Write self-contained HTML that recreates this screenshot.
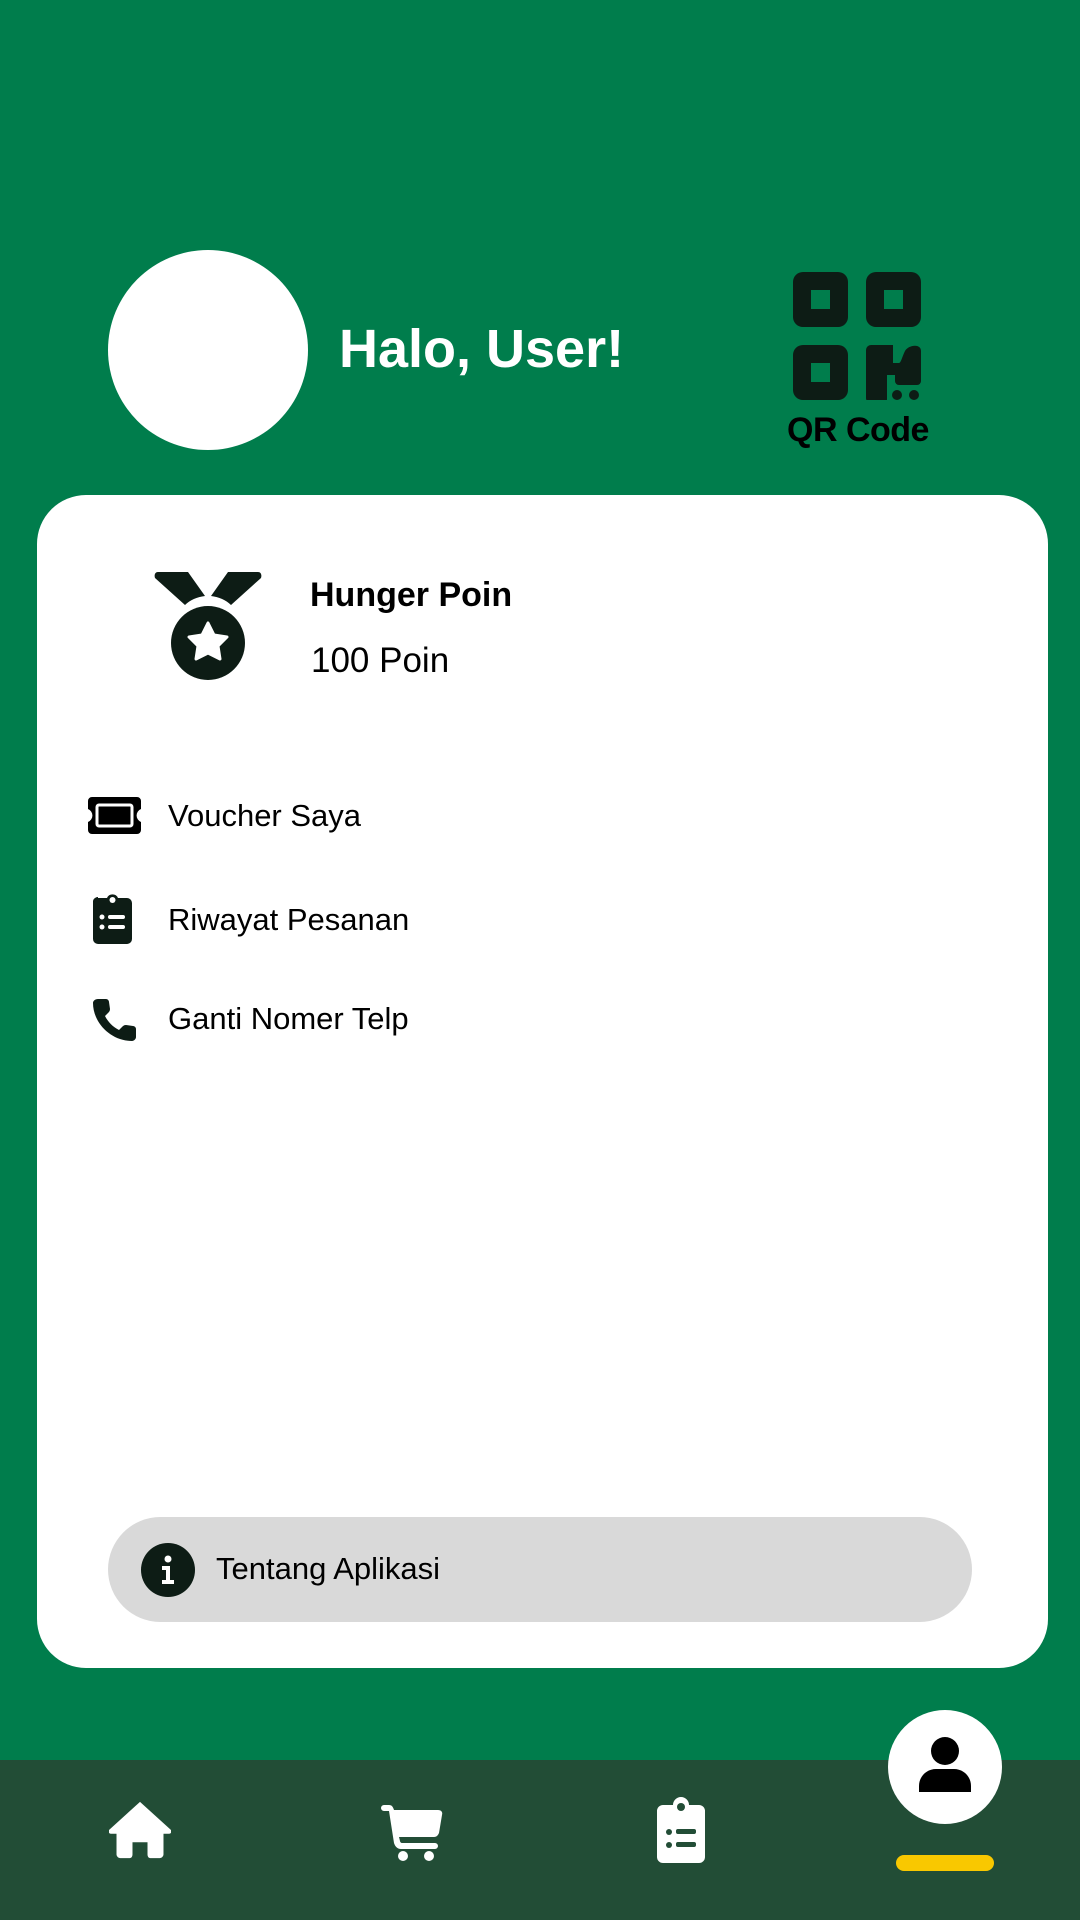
<!DOCTYPE html>
<html><head><meta charset="utf-8"><style>
*{margin:0;padding:0;box-sizing:border-box}
body{width:1080px;height:1920px;background:#007d4c;position:relative;overflow:hidden;font-family:"Liberation Sans",sans-serif}
.a{position:absolute}
.t{position:absolute;white-space:nowrap;color:#000;line-height:1}
</style></head><body>
<div class="a" style="left:108px;top:250px;width:200px;height:200px;border-radius:50%;background:#fff"></div>
<div class="t" style="left:339px;top:322px;font-size:54px;font-weight:bold;color:#fff">Halo, User!</div>
<svg class="a" style="left:793px;top:272px" width="128" height="128" viewBox="0 0 128 128" fill="#0d1c15">
<path fill-rule="evenodd" d="M10 0h35a10 10 0 0 1 10 10v35a10 10 0 0 1-10 10H10A10 10 0 0 1 0 45V10A10 10 0 0 1 10 0zM18 18v19h19V18z"/>
<path fill-rule="evenodd" d="M83 0h35a10 10 0 0 1 10 10v35a10 10 0 0 1-10 10H83a10 10 0 0 1-10-10V10A10 10 0 0 1 83 0zM91 18v19h19V18z"/>
<path fill-rule="evenodd" d="M10 73h35a10 10 0 0 1 10 10v35a10 10 0 0 1-10 10H10a10 10 0 0 1-10-10V83a10 10 0 0 1 10-10zM18 91v19h19V91z"/>
<path d="M78 73h22v18h6c2 0 3-6 6-12 3-6 16-8 16 0v30a4 4 0 0 1-4 4h-18a4 4 0 0 1-4-4v-6h-8v24a4 4 0 0 1-4 4H78a5 5 0 0 1-5-5V78a5 5 0 0 1 5-5z"/>
<circle cx="104" cy="123" r="5"/><circle cx="121" cy="123" r="5"/>
</svg>
<div class="t" style="left:787px;top:413px;font-size:34px;font-weight:bold;letter-spacing:-0.5px">QR Code</div>

<div class="a" style="left:37px;top:495px;width:1011px;height:1173px;background:#fff;border-radius:49px"></div>
<svg class="a" style="left:154px;top:572px" width="108" height="109" viewBox="0 0 108 109" fill="#0d1c15">
<path d="M4 0h30l17 24c-8 1-15 4-20 9L1 6c-1-3 0-6 3-6z"/>
<path d="M104 0H74L57 24c8 1 15 4 20 9l30-27c1-3 0-6-3-6z"/>
<circle cx="54" cy="71" r="37"/>
<path fill="#fff" d="M54 51l6 12 13 2-9 9 2 13-12-6-12 6 2-13-9-9 13-2z" stroke="#fff" stroke-width="3" stroke-linejoin="round"/>
</svg>
<div class="t" style="left:310px;top:578px;font-size:34px;font-weight:bold">Hunger Poin</div>
<div class="t" style="left:311px;top:643px;font-size:35px">100 Poin</div>

<svg class="a" style="left:88px;top:797px" width="53" height="37" viewBox="0 0 53 37">
<path fill="#000" d="M4 0h45a4 4 0 0 1 4 4v8a7 7 0 0 0 0 13v8a4 4 0 0 1-4 4H4a4 4 0 0 1-4-4v-8a7 7 0 0 0 0-13V4a4 4 0 0 1 4-4z"/>
<rect x="9" y="8" width="35" height="21" rx="2" fill="#000" stroke="#fff" stroke-width="3"/>
</svg>
<div class="t" style="left:168px;top:800px;font-size:31px">Voucher Saya</div>

<svg class="a" style="left:93px;top:892px" width="39" height="52" viewBox="0 0 39 52" fill="#0d1c15">
<path d="M5 6h9a6 6 0 0 1 11 0h9a5 5 0 0 1 5 5v36a5 5 0 0 1-5 5H5a5 5 0 0 1-5-5V11a5 5 0 0 1 5-6z"/>
<circle cx="19.5" cy="8" r="3" fill="#fff"/>
<circle cx="9" cy="25" r="2.5" fill="#fff"/><circle cx="9" cy="35" r="2.5" fill="#fff"/>
<rect x="15" y="23" width="17" height="4" rx="2" fill="#fff"/><rect x="15" y="33" width="17" height="4" rx="2" fill="#fff"/>
</svg>
<div class="t" style="left:168px;top:904px;font-size:31px">Riwayat Pesanan</div>

<svg class="a" style="left:92px;top:998px" width="45" height="44" viewBox="0 0 45 44" fill="#0d1c15">
<path d="M6 1l8 0c2 0 3 2 3 3l1 7c0 2-1 3-2 4l-3 3c3 6 8 11 14 14l3-3c1-1 2-2 4-2l7 1c1 0 3 1 3 3v8c0 2-2 4-4 4C19 43 1 25 1 5c0-2 2-4 5-4z"/>
</svg>
<div class="t" style="left:168px;top:1003px;font-size:31px">Ganti Nomer Telp</div>

<div class="a" style="left:108px;top:1517px;width:864px;height:105px;background:#d9d9d9;border-radius:53px"></div>
<svg class="a" style="left:141px;top:1543px" width="54" height="54" viewBox="0 0 54 54">
<circle cx="27" cy="27" r="27" fill="#0d1c15"/>
<circle cx="27" cy="16" r="3.5" fill="#fff"/>
<path d="M21 23h8v14h4v4H21v-4h4v-10h-4z" fill="#fff"/>
</svg>
<div class="t" style="left:216px;top:1553px;font-size:31px">Tentang Aplikasi</div>

<div class="a" style="left:0;top:1760px;width:1080px;height:160px;background:#224d36"></div>
<svg class="a" style="left:109px;top:1800px" width="62" height="60" viewBox="0 0 66 60" fill="#fff">
<path d="M33 0 0 30c-1 2 0 4 2 4h6v22c0 2 2 4 4 4h10c2 0 3-2 3-4V43h16v13c0 2 1 4 3 4h10c2 0 4-2 4-4V34h6c2 0 3-2 2-4z"/>
</svg>
<svg class="a" style="left:381px;top:1805px" width="62" height="56" viewBox="0 0 62 56" fill="#fff">
<path d="M0 3a3 3 0 0 1 3-3h5c3 0 4 2 5 5h44c3 0 5 2 4 5l-3 18c-1 2-2 4-5 4H18l1 4c0 1 1 2 2 2h33a3 3 0 0 1 0 6H20c-4 0-6-3-7-6L8 6H3A3 3 0 0 1 0 3z"/>
<circle cx="22" cy="51" r="5"/><circle cx="48" cy="51" r="5"/>
</svg>
<svg class="a" style="left:657px;top:1797px" width="48" height="66" viewBox="0 0 48 66" fill="#fff">
<path d="M6 8h10a8 8 0 0 1 16 0h10a6 6 0 0 1 6 6v46a6 6 0 0 1-6 6H6a6 6 0 0 1-6-6V14a6 6 0 0 1 6-6z"/>
<circle cx="24" cy="10" r="4" fill="#224d36"/>
<circle cx="12" cy="35" r="3" fill="#224d36"/><circle cx="12" cy="48" r="3" fill="#224d36"/>
<rect x="19" y="32" width="20" height="5" rx="2" fill="#224d36"/><rect x="19" y="45" width="20" height="5" rx="2" fill="#224d36"/>
</svg>
<div class="a" style="left:888px;top:1710px;width:114px;height:114px;border-radius:50%;background:#fff"></div>
<svg class="a" style="left:919px;top:1736px" width="52" height="56" viewBox="0 0 52 56" fill="#000">
<circle cx="26" cy="15" r="14"/>
<path d="M0 56v-6c0-10 8-17 17-17h18c9 0 17 7 17 17v6z"/>
</svg>
<div class="a" style="left:896px;top:1855px;width:98px;height:16px;border-radius:8px;background:#f9c800"></div>
</body></html>
